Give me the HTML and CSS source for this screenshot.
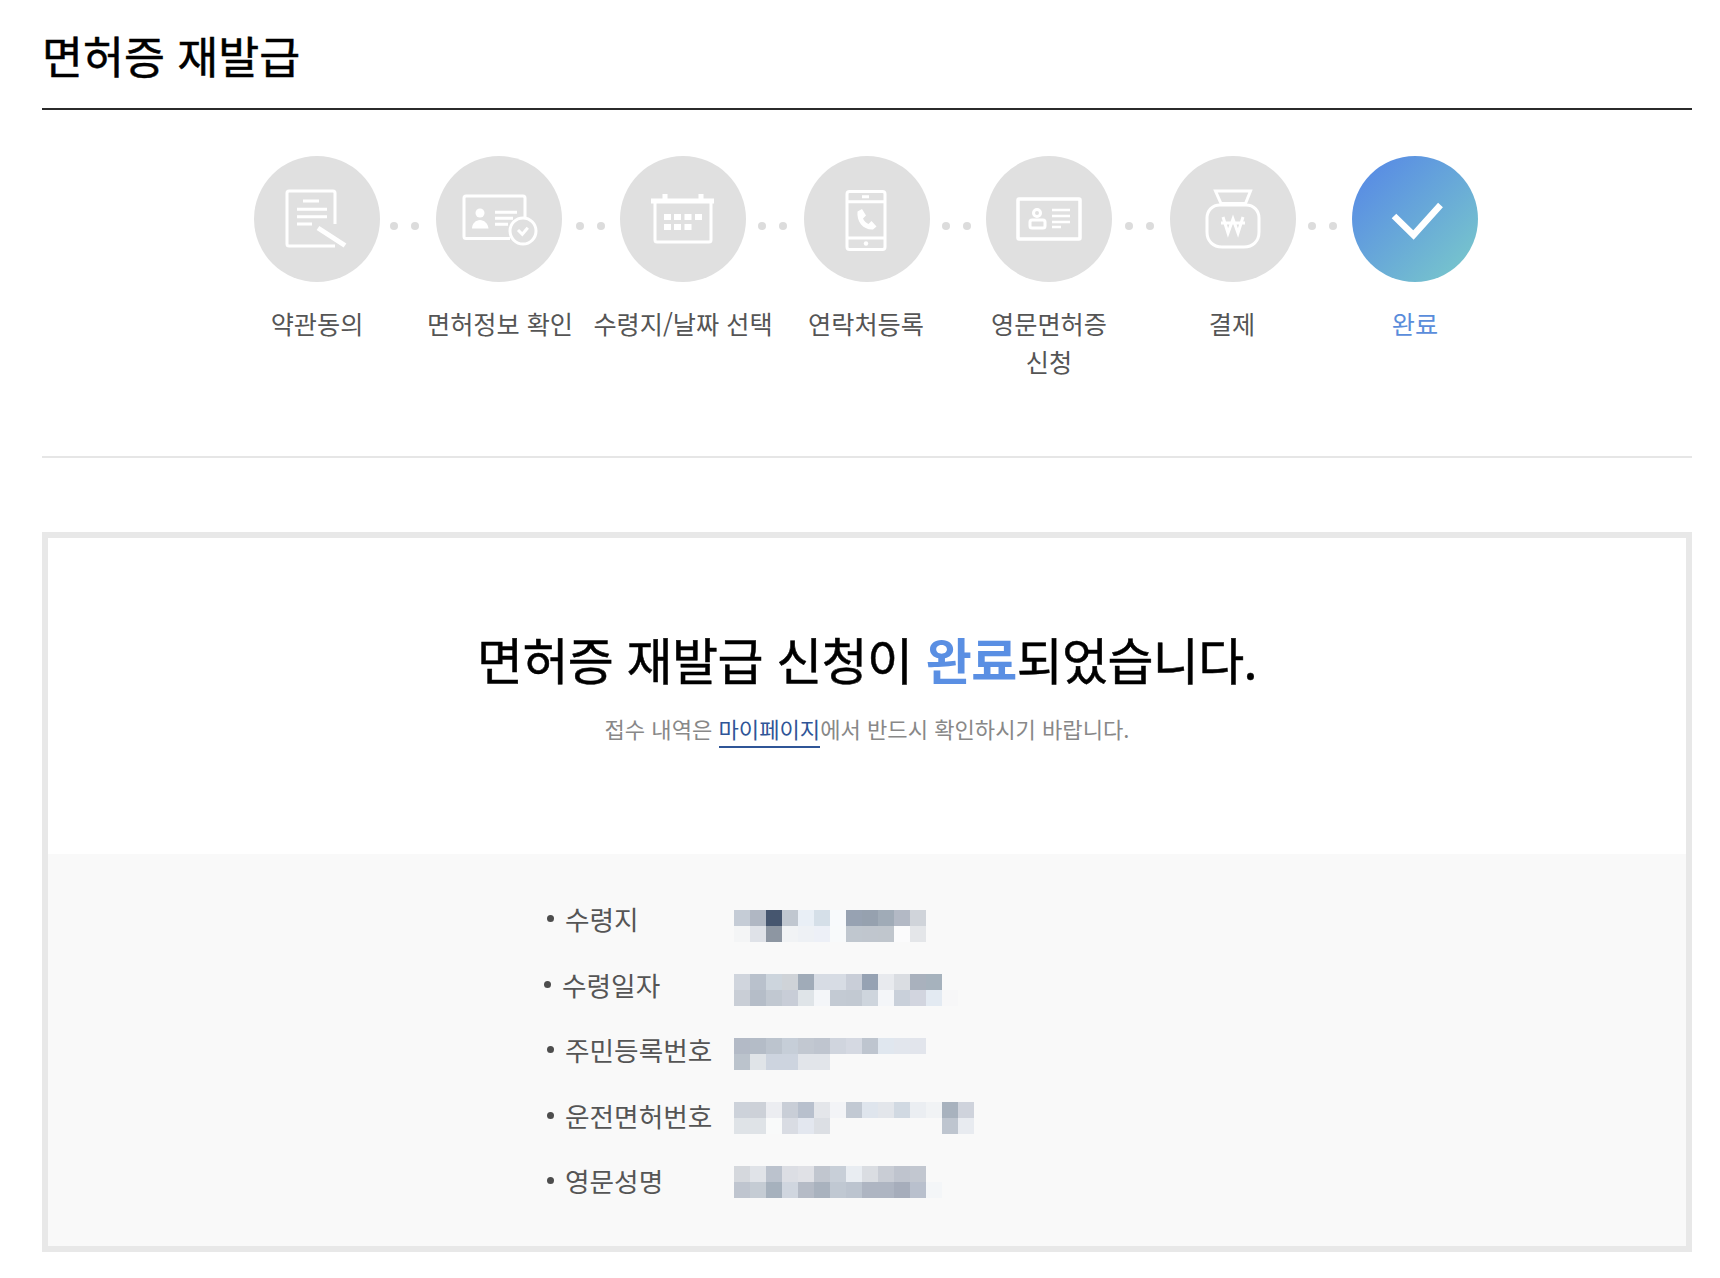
FILE: index.html
```html
<!DOCTYPE html>
<html lang="ko">
<head>
<meta charset="utf-8">
<title>면허증 재발급</title>
<link rel="stylesheet" href="styles.css">
</head>
<body>
<main class="page">
  <h1 class="title">면허증 재발급</h1>
  <div class="steps-wrap">
    <ol class="steps">
      <li class="step">
        <div class="circle">
          <svg class="icon" viewBox="0 0 126 126"><path d="M81 68V37a2 2 0 0 0-2-2H35a2 2 0 0 0-2 2v51a2 2 0 0 0 2 2h46M49 45h16M43 53.300h30M43 60.700h30M43 68h15"/><path class="thick" d="M64 72l27 17.500"/></svg>
        </div>
        <span class="dots"></span>
        <p class="label">약관동의</p>
      </li>
      <li class="step">
        <div class="circle nudge-left">
          <svg class="icon" viewBox="0 0 126 126"><path d="M74 82.500H30a2 2 0 0 1-2-2V42a2 2 0 0 1 2-2h57a2 2 0 0 1 2 2v19M59 56.300h22M59 62.300h18M59 68.300h13"/><circle class="solid" cx="44" cy="57" r="4.500"/><path class="solid" d="M36 72.500c0-5 4-8.500 8-8.500s8 3.500 8.500 8.500z"/><circle cx="87" cy="75" r="13"/><path d="M82 74l4.300 4.300 5.500-6.500"/></svg>
        </div>
        <span class="dots"></span>
        <p class="label">면허정보 확인</p>
      </li>
      <li class="step">
        <div class="circle">
          <svg class="icon" viewBox="0 0 126 126"><path d="M35 46v38a2 2 0 0 0 2 2h52a2 2 0 0 0 2-2V46"/><path class="thick" d="M31 45h63M45 38v5M81 38v5"/><path class="solid" d="M44 58h7v6h-7zM54 58h7v6h-7zM64.500 58h7v6h-7zM75 58h7v6h-7zM44 68h7v6h-7zM54 68h7v6h-7zM64.500 68h7v6h-7z"/></svg>
        </div>
        <span class="dots dots-3"></span>
        <p class="label">수령지/날짜 선택</p>
      </li>
      <li class="step">
        <div class="circle nudge-right">
          <svg class="icon" viewBox="0 0 126 126"><rect x="43" y="35.500" width="38" height="58" rx="2.500"/><path d="M43 45.700h38M43 82h38M58 40.700h7"/><circle class="solid" cx="62" cy="87.500" r="2.200"/><path class="solid" d="M53.500 55.500l4.500-2.500 4 6.500-3 3c1 2.500 3 4.500 5.500 5.500l3-3 5 5.500-3.500 3c-10 .5-16.500-8-15.500-18z"/></svg>
        </div>
        <span class="dots"></span>
        <p class="label">연락처등록</p>
      </li>
      <li class="step">
        <div class="circle">
          <svg class="icon" viewBox="0 0 126 126"><rect class="thick-rect" x="32" y="43" width="62" height="40" rx="1"/><circle cx="51" cy="57" r="3.500"/><rect x="44" y="64" width="15" height="8" rx="2"/><path class="thin" d="M66 54h18M66 60h18M66 66h18M66 71h9"/></svg>
        </div>
        <span class="dots"></span>
        <p class="label">영문면허증<br>신청</p>
      </li>
      <li class="step">
        <div class="circle nudge-right">
          <svg class="icon" viewBox="0 0 126 126"><path d="M45.500 35h35l-5 12.500H51z"/><path d="M50 49h26c8 0 13 6 13 13v14c0 9-6 15-15 15H52c-9 0-15-6-15-15V62c0-7 5-13 13-13z"/><path class="won" d="M53 61l5 16 5-14 5 14 5-16M51 67h24"/></svg>
        </div>
        <span class="dots"></span>
        <p class="label">결제</p>
      </li>
      <li class="step">
        <div class="circle circle-current">
          <svg class="icon" viewBox="0 0 126 126"><path class="check" d="M42 60l19.500 19L88.500 49"/></svg>
        </div>
        <p class="label label-current">완료</p>
      </li>
    </ol>
  </div>
  <section class="result">
    <div class="message">
      <h2 class="headline">면허증 재발급 신청이 <em class="accent">완료</em>되었습니다.</h2>
      <p class="sub">접수 내역은 <a class="link" href="#">마이페이지</a>에서 반드시 확인하시기 바랍니다.</p>
    </div>
    <div class="details">
      <div class="names">
        <span class="name">수령지</span>
        <span class="name name-shift">수령일자</span>
        <span class="name">주민등록번호</span>
        <span class="name">운전면허번호</span>
        <span class="name">영문성명</span>
      </div>
      <div class="values">
        <svg class="mosaic" width="240" height="32" shape-rendering="crispEdges"><g id="m1"></g></svg>
        <svg class="mosaic" width="240" height="32" shape-rendering="crispEdges"><g id="m2"></g></svg>
        <svg class="mosaic" width="240" height="32" shape-rendering="crispEdges"><g id="m3"></g></svg>
        <svg class="mosaic" width="240" height="32" shape-rendering="crispEdges"><g id="m4"></g></svg>
        <svg class="mosaic" width="240" height="32" shape-rendering="crispEdges"><g id="m5"></g></svg>
      </div>
    </div>
  </section>
</main>
<script src="mosaic.js"></script>
</body>
</html>
```
FILE: styles.css
```css
* { box-sizing: border-box; }
html, body { margin: 0; padding: 0; background: #fff; }
body {
  font-family: "Noto Sans CJK KR", "Noto Sans", "Liberation Sans", sans-serif;
  color: #000;
}
.page { padding: 0 28px 0 42px; }
.title {
  margin: 0;
  height: 110px;
  padding-top: 20px;
  font-size: 44.500px;
  line-height: 70px;
  font-weight: 400;
  -webkit-text-stroke: 0.500px #000;
  border-bottom: 2px solid #2b2b2b;
}
.steps-wrap {
  height: 348px;
  padding-top: 46px;
  border-bottom: 2px solid #e6e6e6;
}
.steps {
  list-style: none;
  margin: 0;
  padding: 0 2px 0 0;
  display: flex;
  justify-content: center;
}
.step {
  position: relative;
  width: 183px;
  display: flex;
  flex-direction: column;
  align-items: center;
}
.circle {
  width: 126px;
  height: 126px;
  border-radius: 50%;
  background: #e0e0e0;
}
.nudge-left { margin-right: 2px; }
.nudge-right { margin-left: 2px; }
.circle-current { background: linear-gradient(135deg, #5a8fe3 15%, #76c3cd 88%); }
.icon { display: block; width: 126px; height: 126px; fill: none; stroke: #fff; stroke-width: 3; }
.icon .thick { stroke-width: 5; }
.icon .thick-rect { stroke-width: 3.500; }
.icon .thin { stroke-width: 2.500; }
.icon .won { stroke-width: 3; }
.icon .solid { fill: #fff; stroke: none; }
.icon .check { stroke-width: 6.500; }
.dots {
  position: absolute;
  left: 167px;
  top: 66px;
  width: 8px;
  height: 8px;
  border-radius: 50%;
  background: #dcdcdc;
  box-shadow: 21px 0 0 #dcdcdc;
}
.step:first-child .dots { left: 164px; }
.dots-3 { left: 166px; }
.label {
  margin: 22px 0 0;
  font-size: 25.200px;
  line-height: 38px;
  color: #555;
  text-align: center;
  white-space: nowrap;
}
.label-current { color: #5a8ddb; }
.result {
  margin-top: 74px;
  height: 720px;
  border: 6px solid #e8e8e8;
  display: flex;
  flex-direction: column;
}
.message {
  height: 316px;
  padding-top: 82px;
  text-align: center;
}
.headline {
  margin: 0;
  font-size: 50px;
  line-height: 76px;
  font-weight: 400;
  -webkit-text-stroke: 0.500px #000;
  letter-spacing: -0.600px;
}
.accent { font-style: normal; font-weight: 700; -webkit-text-stroke: 0; color: #5a8fe3; }
.sub {
  margin: 15px 0 0;
  font-size: 22.100px;
  line-height: 34px;
  color: #888;
}
.link { color: #2f5597; text-decoration: none; border-bottom: 2px solid #2f5597; padding-bottom: 2px; }
.details {
  flex: 1;
  background: #f9f9f9;
  padding-left: 517px;
  display: flex;
}
.names {
  width: 169px;
  padding-top: 32px;
  display: flex;
  flex-direction: column;
}
.name {
  position: relative;
  height: 65.500px;
  font-size: 26.700px;
  line-height: 65.500px;
  color: #555;
}
.name-shift { margin-left: -3px; }
.name::before {
  content: "";
  position: absolute;
  left: -18px;
  top: 29px;
  width: 7px;
  height: 7px;
  border-radius: 50%;
  background: #4d4d4d;
}
.values {
  padding-top: 56px;
  display: flex;
  flex-direction: column;
  gap: 32px;
}
.mosaic { display: block; }
```
FILE: mosaic.js
```js
var data = {
  m1: [["c5ccd6","b0b7c3","46566f","c0c7d0","e9eff6","d5dfe8","f8fafc","97a2b2","96a1af","a0abb7","b3b9c5","d0d4da"],
       ["f4f5f6","dfe2e8","8d96a2","f1f3f5","eef1f5","edf0f7","f8fafb","c0c7cf","c0c6ce","c0c6cd","fbfbfc","e4e6e9"]],
  m2: [["d0d5dd","b9c1cc","cdd5dd","cfd3d8","a0abb8","d7dce4","d7dce4","c9ced8","96a2b3","e8eaee","dadde2","a9b1bd","a6b2bd"],
       ["c9ced6","b5bdc8","c1c8d1","c8cdd7","dfe4e8","f4f6f9","c3cad3","c2c9d2","ced5dd","f4f6f9","c9d0da","d2d5df","e3eaf2","f7f7f8"]],
  m3: [["b3bac6","b4bcc7","bcc4ce","c6ced8","c2c8d1","bfc5cf","d0d5de","d5d9e2","bec5cf","e0e7ef","e2e6ed","e2e5ec"],
       ["bbc3cc","e0e4e8","cdd4df","cdd4df","e2e5ea","e2e5ea"]],
  m4: [["cdd2da","cdd1d8","ecedf1","c9ced7","b8c0cd","e4e6ea","f3f4f7","c2c9d3","dfe5ed","e3e6eb","d1d9e2","ebeef2","f1f3f5","a8b2be","cfd3dc"],
       ["dfe3e7","dfe3e7","f9fafa","d9dce3","e3e7ef","dcdfe4","f9f9f9","f9f9f9","f9f9f9","f9f9f9","f9f9f9","f9f9f9","f9f9f9","bec5cf","e8ebf0"]],
  m5: [["d5d8dd","e0e3e8","bbc2cd","dcdee4","e0e1e6","c1c6cf","c8cfd8","e9edf2","dadde2","c9cdd5","bfc4ce","c2c7d0"],
       ["bfc5cf","c5ccd4","a6b1bd","d0d6df","b5bbc6","a9b2be","c0c8d2","bcc4cf","aeb5c2","aeb5c2","a6adbb","b9c0cd","f4f6f8"]]
};
Object.keys(data).forEach(function (id) {
  var g = document.getElementById(id);
  data[id].forEach(function (row, y) {
    row.forEach(function (color, x) {
      var r = document.createElementNS("http://www.w3.org/2000/svg", "rect");
      r.setAttribute("x", x * 16);
      r.setAttribute("y", y * 16);
      r.setAttribute("width", 16);
      r.setAttribute("height", 16);
      r.setAttribute("fill", "#" + color);
      g.appendChild(r);
    });
  });
});
```
